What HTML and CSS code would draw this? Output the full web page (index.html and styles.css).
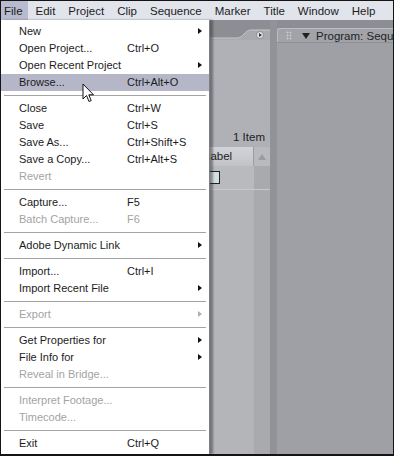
FILE: index.html
```html
<!DOCTYPE html>
<html lang="en">
<head>
  <meta charset="UTF-8" />
  <title>Premiere - File menu</title>
  <link rel="stylesheet" href="styles.css">
</head>
<body>
  <div class="screen">
    <div class="menubar">
      <span class="mb-item active">File</span>
      <span class="mb-item">Edit</span>
      <span class="mb-item">Project</span>
      <span class="mb-item">Clip</span>
      <span class="mb-item">Sequence</span>
      <span class="mb-item">Marker</span>
      <span class="mb-item">Title</span>
      <span class="mb-item">Window</span>
      <span class="mb-item">Help</span>
    </div>

    <div class="workspace">
      <div class="panel-left">
        <svg class="tab-top" width="269" height="20" viewBox="0 0 269 20">
          <rect width="269" height="20" fill="#8d8e93"/>
          <path d="M0 18 L236 18 C242 18 244 10 250 10 L269 10 L269 20 L0 20 Z" fill="#a9aaaf"/>
          <path d="M0 18 L236 18 C242 18 244 10 250 10 L269 10" fill="none" stroke="#c4c5c9" stroke-width="1"/>
          <circle cx="259" cy="15" r="3.5" fill="#e6e6e8" stroke="#7d7e83" stroke-width="0.8"/>
          <path d="M258 13 L261 15 L258 17 Z" fill="#333"/>
        </svg>
        <div class="panel-body">
          <div class="item-count">1 Item</div>
          <div class="list-head">
            <div class="col-label">Label</div>
            <div class="sort-btn"><span class="up-tri"></span></div>
          </div>
          <div class="list-row">
            <div class="row-cell"><span class="swatch"></span></div>
            <div class="row-gutter"></div>
          </div>
          <div class="list-fill">
            <div class="fill-main"></div>
            <div class="fill-gutter"></div>
          </div>
        </div>
      </div>
      <div class="divider"></div>
      <div class="panel-right">
        <div class="rp-top"></div>
        <div class="rp-tab">
          <span class="grip"></span>
          <span class="down-tri"></span>
          <span class="rp-title">Program: Sequence 01</span>
        </div>
        <div class="rp-body"></div>
      </div>
    </div>

    <div class="menu">
      <div class="mi">New<span class="arrow"></span></div>
      <div class="mi">Open Project...<span class="key">Ctrl+O</span></div>
      <div class="mi">Open Recent Project<span class="arrow"></span></div>
      <div class="mi hl">Browse...<span class="key">Ctrl+Alt+O</span></div>
      <div class="sep"></div>
      <div class="mi">Close<span class="key">Ctrl+W</span></div>
      <div class="mi">Save<span class="key">Ctrl+S</span></div>
      <div class="mi">Save As...<span class="key">Ctrl+Shift+S</span></div>
      <div class="mi">Save a Copy...<span class="key">Ctrl+Alt+S</span></div>
      <div class="mi off">Revert</div>
      <div class="sep"></div>
      <div class="mi">Capture...<span class="key">F5</span></div>
      <div class="mi off">Batch Capture...<span class="key">F6</span></div>
      <div class="sep"></div>
      <div class="mi">Adobe Dynamic Link<span class="arrow"></span></div>
      <div class="sep"></div>
      <div class="mi">Import...<span class="key">Ctrl+I</span></div>
      <div class="mi">Import Recent File<span class="arrow"></span></div>
      <div class="sep"></div>
      <div class="mi off">Export<span class="arrow"></span></div>
      <div class="sep"></div>
      <div class="mi">Get Properties for<span class="arrow"></span></div>
      <div class="mi">File Info for<span class="arrow"></span></div>
      <div class="mi off">Reveal in Bridge...</div>
      <div class="sep"></div>
      <div class="mi off">Interpret Footage...</div>
      <div class="mi off">Timecode...</div>
      <div class="sep"></div>
      <div class="mi">Exit<span class="key">Ctrl+Q</span></div>
    </div>

    <svg class="pointer" width="14" height="22" viewBox="0 0 14 22">
      <path d="M1 1 L1 16 L4.5 12.5 L7 18.5 L9.2 17.6 L6.8 11.8 L11.5 11.8 Z" fill="#fff" stroke="#111" stroke-width="1" stroke-linejoin="round"/>
    </svg>
  </div>
</body>
</html>
```

FILE: styles.css
```css
* {
  box-sizing: border-box;
}

body {
  margin: 0;
  font-family: 'Liberation Sans', Arial, sans-serif;
  font-size: 11px;
  color: #1c1c1c;
}

.screen {
  position: relative;
  width: 394px;
  height: 456px;
  border: 1px solid #141414;
  border-bottom-width: 2px;
  background: #9e9fa4;
  overflow: hidden;
  display: flex;
  flex-direction: column;
}

/* menu bar */
.menubar {
  height: 19px;
  background: #e2e4ec;
  display: flex;
  align-items: stretch;
  gap: 1px;
}

.mb-item {
  display: flex;
  align-items: center;
  padding: 0 5px 0 3px;
  font-size: 11.5px;
  margin-right: 4px;
}

.mb-item.active {
  background: #b8bbcf;
}

/* panels behind the menu */
.workspace {
  flex: 1;
  display: flex;
}

.panel-left {
  width: 269px;
  display: flex;
  flex-direction: column;
  background: #b0b1b6;
}

.tab-top {
  display: block;
}

.panel-body {
  flex: 1;
  display: flex;
  flex-direction: column;
  padding-left: 200px;
}

.item-count {
  text-align: right;
  padding: 91px 5px 0 0;
  height: 107px;
  font-size: 11.5px;
  color: #222;
}

.list-head {
  height: 19px;
  display: flex;
}

.col-label {
  flex: 1;
  background: linear-gradient(#d3d4d8, #c2c3c7);
  border-right: 1px solid #9c9da2;
  padding: 3px 0 0 3px;
  font-size: 11.5px;
  color: #222;
}

.sort-btn {
  width: 16px;
  background: #b9babe;
  display: flex;
  align-items: center;
  justify-content: center;
}

.up-tri {
  width: 0;
  height: 0;
  border-left: 4px solid transparent;
  border-right: 4px solid transparent;
  border-bottom: 6px solid #9a9ba0;
}

.list-row {
  height: 24px;
  display: flex;
  border-bottom: 1px solid #c8c9cd;
}

.row-cell {
  flex: 1;
  background: #b9babe;
  padding-top: 5px;
}

.swatch {
  display: block;
  width: 19px;
  height: 13px;
  background: #d4e0de;
  border: 1px solid #222;
}

.row-gutter,
.fill-gutter {
  width: 16px;
  background: #a9aaae;
}

.list-fill {
  flex: 1;
  display: flex;
}

.fill-main {
  flex: 1;
  background: #b4b5b9;
}

.divider {
  width: 7px;
  background: #929398;
}

.panel-right {
  flex: 1;
  min-width: 0;
  display: flex;
  flex-direction: column;
}

.rp-top {
  height: 8px;
  background: #8d8e93;
}

.rp-tab {
  height: 14px;
  background: #a2a3a8;
  border-top-left-radius: 4px;
  border-top: 1px solid #bdbec2;
  border-left: 1px solid #bdbec2;
  display: flex;
  align-items: center;
  padding-left: 8px;
  white-space: nowrap;
  overflow: hidden;
}

.grip {
  flex: none;
  width: 6px;
  height: 9px;
  background-image: radial-gradient(circle, #c6c7cb 0.8px, transparent 1.2px);
  background-size: 3px 3px;
  margin-right: 10px;
}

.down-tri {
  flex: none;
  width: 0;
  height: 0;
  border-left: 4px solid transparent;
  border-right: 4px solid transparent;
  border-top: 6px solid #222;
  margin-right: 6px;
}

.rp-title {
  font-size: 11.5px;
  color: #222;
}

.rp-body {
  flex: 1;
  background: #9fa0a5;
  border-top: 1px solid #8f9095;
}

/* the open File menu */
.menu {
  position: absolute;
  left: 0;
  top: 19px;
  bottom: 0;
  width: 209px;
  background: #fff;
  padding-top: 3px;
  border-right: 1px solid #7e7f84;
  box-shadow: 3px 0 2px rgba(40, 40, 45, 0.45);
}

.mi {
  position: relative;
  height: 17px;
  line-height: 17px;
  padding-left: 18px;
  color: #1c1c1c;
}

.mi.hl {
  background: #b5b7c9;
}

.mi.off {
  color: #a3a3a3;
}

.key {
  position: absolute;
  left: 126px;
  top: 0;
}

.arrow {
  position: absolute;
  left: 197px;
  top: 5px;
  width: 0;
  height: 0;
  border-top: 3.5px solid transparent;
  border-bottom: 3.5px solid transparent;
  border-left: 4px solid #111;
}

.mi.off .arrow {
  border-left-color: #b0b0b0;
}

.sep {
  height: 9px;
  padding-top: 4px;
  margin: 0 3px;
}

.sep::before {
  content: "";
  display: block;
  height: 1px;
  background: #a4a4a4;
}

.pointer {
  position: absolute;
  left: 81px;
  top: 82px;
}
```
